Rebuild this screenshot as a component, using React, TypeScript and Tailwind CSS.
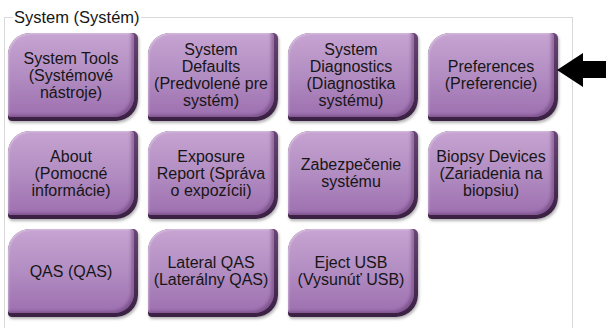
const items = [
  ["System Tools", "(Systémové", "nástroje)"],
  ["System", "Defaults", "(Predvolené pre", "systém)"],
  ["System", "Diagnostics", "(Diagnostika", "systému)"],
  ["Preferences", "(Preferencie)"],
  ["About", "(Pomocné", "informácie)"],
  ["Exposure", "Report (Správa", "o expozícii)"],
  ["Zabezpečenie", "systému"],
  ["Biopsy Devices", "(Zariadenia na", "biopsiu)"],
  ["QAS (QAS)"],
  ["Lateral QAS", "(Laterálny QAS)"],
  ["Eject USB", "(Vysunúť USB)"],
];

function Tile({ lines }: { lines: string[] }) {
  return (
    <div className="relative w-[130px] h-[88px]">
      {/* tmavý okraj vpravo a dole */}
      <div className="absolute inset-0 rounded-tl-[22px] rounded-br-[22px] rounded-tr-[5px] rounded-bl-[4px] bg-gradient-to-b from-[#6a4477] to-[#3a2043] shadow-[1px_2px_3px_rgba(0,0,0,0.3)]" />
      <div className="absolute left-0 top-0 right-[4px] bottom-[4px] rounded-tl-[22px] rounded-br-[20px] rounded-tr-[4px] rounded-bl-[3px] bg-gradient-to-b from-[#c7a4d2] via-[#b28dc2] to-[#9d6faf] shadow-[inset_-3px_-2px_3px_rgba(90,50,105,0.45),inset_1px_1px_2px_rgba(255,255,255,0.35)] flex flex-col items-center justify-center text-center text-[16px] leading-[17px] text-[#161616]">
        {lines.map((l) => (
          <div key={l}>{l}</div>
        ))}
      </div>
    </div>
  );
}

export default function App() {
  return (
    <div className="relative w-[606px] h-[328px] bg-white overflow-hidden font-['Liberation_Sans',Arial,sans-serif]">
      <fieldset className="ml-[4px] mt-[9px] w-[569px] h-[330px] border border-[#d9d9d9] pl-[3px] pt-[7px]">
        <legend className="ml-[5px] px-[1px] text-[16.5px] leading-[17px] text-[#161616]">System (Systém)</legend>
        <div className="grid grid-cols-[repeat(4,130px)] gap-x-[10px] gap-y-[10px]">
          {items.map((lines, i) => (
            <Tile key={i} lines={lines} />
          ))}
        </div>
      </fieldset>
      <svg className="absolute left-[556px] top-[52px]" width="50" height="36" viewBox="0 0 50 36">
        <polygon points="1,18 27,1 27,9 50,9 50,26 27,26 27,35" fill="#000" />
      </svg>
    </div>
  );
}
